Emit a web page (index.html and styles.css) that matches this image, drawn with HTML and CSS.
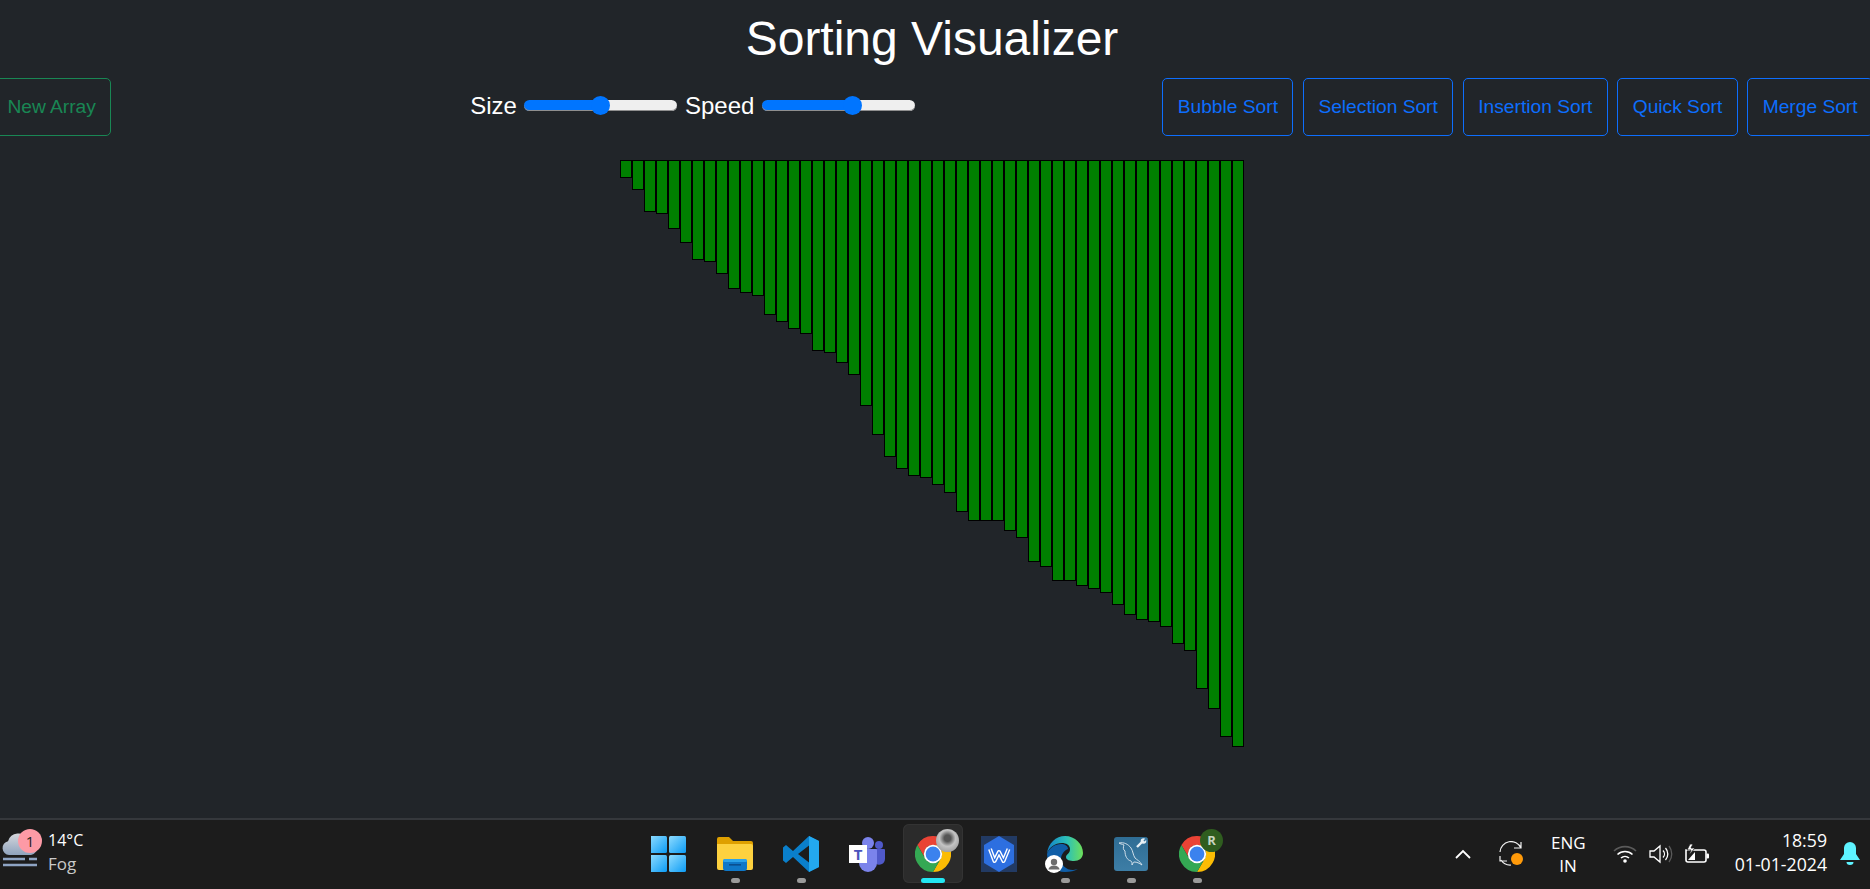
FILE: index.html
```html
<!DOCTYPE html>
<html lang="en">
<head>
  <meta charset="UTF-8" />
  <title>Sorting Visualizer</title>
  <link rel="stylesheet" href="styles.css">
</head>
<body>

<svg class="defs" width="0" height="0" aria-hidden="true">
  <symbol id="chrome" viewBox="0 0 36 36">
    <path d="M2.41 9A18 18 0 0 1 33.59 9H18A9 9 0 0 0 10.2 22.5Z" fill="#ea4335"/>
    <path d="M2.41 9A18 18 0 0 1 33.59 9H18A9 9 0 0 0 10.2 22.5Z" fill="#fbbc04" transform="rotate(120 18 18)"/>
    <path d="M2.41 9A18 18 0 0 1 33.59 9H18A9 9 0 0 0 10.2 22.5Z" fill="#34a853" transform="rotate(240 18 18)"/>
    <circle cx="18" cy="18" r="9.2" fill="#fff"/>
    <circle cx="18" cy="18" r="7.4" fill="#3b82ee"/>
  </symbol>
  <linearGradient id="win-g" x1="0" y1="0" x2="1" y2="1">
    <stop offset="0" stop-color="#8fdcff"/>
    <stop offset="1" stop-color="#0b9bf5"/>
  </linearGradient>
  <linearGradient id="edge-g" x1="0" y1="0.5" x2="1" y2="0.5">
    <stop offset="0" stop-color="#1383c9"/>
    <stop offset="0.55" stop-color="#2cc0b8"/>
    <stop offset="1" stop-color="#6ee05a"/>
  </linearGradient>
  <linearGradient id="mysql-g" x1="0" y1="0" x2="0" y2="1">
    <stop offset="0" stop-color="#2f6d94"/>
    <stop offset="1" stop-color="#3d7ea6"/>
  </linearGradient>
  <linearGradient id="cloud-g" x1="0" y1="0" x2="0" y2="1">
    <stop offset="0" stop-color="#d5d7dc"/>
    <stop offset="1" stop-color="#8fa3bd"/>
  </linearGradient>
</svg>

<main class="page">
  <h1 class="title">Sorting Visualizer</h1>

  <div class="toolbar">
    <button class="btn btn-green" type="button">New Array</button>

    <div class="controls">
      <label for="size">Size</label>
      <input class="slider" id="size" type="range" value="50" style="--fill:50%">
      <label class="speed-label" for="speed">Speed</label>
      <input class="slider" id="speed" type="range" value="60" style="--fill:59%">
    </div>

    <div class="algos">
      <button class="btn" type="button">Bubble Sort</button>
      <button class="btn" type="button">Selection Sort</button>
      <button class="btn" type="button">Insertion Sort</button>
      <button class="btn" type="button">Quick Sort</button>
      <button class="btn" type="button">Merge Sort</button>
    </div>
  </div>

  <div class="bars">
    <div class="bar" style="height:18px"></div>
    <div class="bar" style="height:30px"></div>
    <div class="bar" style="height:52px"></div>
    <div class="bar" style="height:54px"></div>
    <div class="bar" style="height:69px"></div>
    <div class="bar" style="height:83px"></div>
    <div class="bar" style="height:100px"></div>
    <div class="bar" style="height:102px"></div>
    <div class="bar" style="height:114px"></div>
    <div class="bar" style="height:129px"></div>
    <div class="bar" style="height:133px"></div>
    <div class="bar" style="height:136px"></div>
    <div class="bar" style="height:155px"></div>
    <div class="bar" style="height:162px"></div>
    <div class="bar" style="height:169px"></div>
    <div class="bar" style="height:174px"></div>
    <div class="bar" style="height:191px"></div>
    <div class="bar" style="height:193px"></div>
    <div class="bar" style="height:203px"></div>
    <div class="bar" style="height:215px"></div>
    <div class="bar" style="height:246px"></div>
    <div class="bar" style="height:275px"></div>
    <div class="bar" style="height:297px"></div>
    <div class="bar" style="height:309px"></div>
    <div class="bar" style="height:316px"></div>
    <div class="bar" style="height:318px"></div>
    <div class="bar" style="height:325px"></div>
    <div class="bar" style="height:333px"></div>
    <div class="bar" style="height:352px"></div>
    <div class="bar" style="height:361px"></div>
    <div class="bar" style="height:361px"></div>
    <div class="bar" style="height:361px"></div>
    <div class="bar" style="height:371px"></div>
    <div class="bar" style="height:378px"></div>
    <div class="bar" style="height:402px"></div>
    <div class="bar" style="height:407px"></div>
    <div class="bar" style="height:421px"></div>
    <div class="bar" style="height:421px"></div>
    <div class="bar" style="height:426px"></div>
    <div class="bar" style="height:429px"></div>
    <div class="bar" style="height:433px"></div>
    <div class="bar" style="height:445px"></div>
    <div class="bar" style="height:455px"></div>
    <div class="bar" style="height:460px"></div>
    <div class="bar" style="height:462px"></div>
    <div class="bar" style="height:467px"></div>
    <div class="bar" style="height:484px"></div>
    <div class="bar" style="height:491px"></div>
    <div class="bar" style="height:529px"></div>
    <div class="bar" style="height:549px"></div>
    <div class="bar" style="height:577px"></div>
    <div class="bar" style="height:587px"></div>
  </div>
</main>

<footer class="taskbar">
  <div class="weather">
    <div class="weather-icon">
      <svg width="38" height="38" viewBox="0 0 38 38">
        <path d="M8 24a7 7 0 0 1-1-13.8A11 11 0 0 1 27 8a8 8 0 0 1 3 16Z" fill="url(#cloud-g)"/>
        <path d="M2 28h22M28 28h8M2 34h34" stroke="#8ea4c4" stroke-width="2.6" fill="none"/>
      </svg>
      <span class="weather-badge">1</span>
    </div>
    <div class="weather-text">
      <span class="temp">14°C</span>
      <span class="cond">Fog</span>
    </div>
  </div>

  <div class="apps">
    <div class="app">
      <svg class="icon" width="36" height="36" viewBox="1 0 36 36">
        <rect x="0" y="0" width="17" height="17" rx="1.5" fill="url(#win-g)"/>
        <rect x="19" y="0" width="17" height="17" rx="1.5" fill="url(#win-g)"/>
        <rect x="0" y="19" width="17" height="17" rx="1.5" fill="url(#win-g)"/>
        <rect x="19" y="19" width="17" height="17" rx="1.5" fill="url(#win-g)"/>
      </svg>
    </div>
    <div class="app">
      <svg class="icon" width="36" height="36" viewBox="0 0 36 36">
        <path d="M0 3a2 2 0 0 1 2-2h10l4 4h18a2 2 0 0 1 2 2v4H0Z" fill="#dfa000"/>
        <path d="M0 8h34a2 2 0 0 1 2 2v22a2 2 0 0 1-2 2H2a2 2 0 0 1-2-2Z" fill="#fdd13f"/>
        <rect x="6" y="23" width="24" height="12" rx="3" fill="#0f78c8"/>
        <rect x="6" y="23" width="24" height="3" rx="1.5" fill="#2ba3ea"/>
        <rect x="12" y="28" width="12" height="1.6" fill="#0a4f8f"/>
      </svg>
      <span class="dot"></span>
    </div>
    <div class="app">
      <svg class="icon" width="36" height="36" viewBox="0 0 36 36">
        <path d="M26 0 36 5v26l-10 5L10 21 3 27 0 24.500V11.500L3 9l7 6Z" fill="#0a7fcb"/>
        <path d="M26 0 36 5v26l-10 5Z" fill="#23a8ef"/>
        <path d="M26 9.500 15 18l11 8.500Z" fill="#1c1c1c"/>
      </svg>
      <span class="dot"></span>
    </div>
    <div class="app">
      <svg class="icon" width="36" height="36" viewBox="0 0 36 36">
        <circle cx="19" cy="7" r="6" fill="#7b83eb"/>
        <circle cx="30" cy="9" r="4" fill="#5059c9"/>
        <path d="M24 13h11a1 1 0 0 1 1 1v9a6 6 0 0 1-9 5Z" fill="#5059c9"/>
        <path d="M10 13h17a1 1 0 0 1 1 1v13a9 9 0 0 1-18 0Z" fill="#7b83eb"/>
      </svg>
      <span class="teams-t">T</span>
      <span class="dot dot-none"></span>
    </div>
    <div class="app app-active">
      <svg class="icon" width="36" height="36"><use href="#chrome"/></svg>
      <span class="avatar avatar-photo"></span>
      <span class="dot dot-active"></span>
    </div>
    <div class="app">
      <svg class="icon" width="36" height="36" viewBox="0 0 36 36">
        <rect width="36" height="36" fill="#223a63"/>
        <path d="M18 0 33 9v18L18 36 3 27V9Z" fill="#2d6fe0"/>
        <path d="M9 13 13.500 25 18 16l4.500 9L27.500 13" fill="none" stroke="#fff" stroke-width="4" stroke-linejoin="round"/>
        <path d="M9 13 13.500 25 18 16l4.500 9L27.500 13" fill="none" stroke="#2d6fe0" stroke-width="1.200" stroke-linejoin="round"/>
      </svg>
    </div>
    <div class="app">
      <svg class="icon" width="36" height="36" viewBox="0 0 36 36">
        <path d="M0 18C1 7 9 0 18 0c10 0 18 8 18 17 0 5-4 8-9 8-4 0-8-1-8-4 0-3 4-3 4-8 0-4-4-6-8-6C8 7 2 11 0 18Z" fill="url(#edge-g)"/>
        <path d="M0 18c2-6 8-10 14-10 4 0 7 2 7 5-3 1-7 5-7 10 0 6 5 11 12 11 2 0 4-1 5-1-3 2-8 3-13 3C8 36 0 28 0 18Z" fill="#0f5ea8"/>
      </svg>
      <span class="user-badge">
        <svg width="18" height="18" viewBox="0 0 18 18">
          <circle cx="9" cy="7" r="3.200" fill="#6d6d6d"/>
          <path d="M3.500 14.500a5.500 4 0 0 1 11 0Z" fill="#6d6d6d"/>
        </svg>
      </span>
      <span class="dot"></span>
    </div>
    <div class="app">
      <svg class="icon" width="36" height="36" viewBox="0 0 36 36">
        <rect x="1" y="1" width="34" height="34" rx="3" fill="url(#mysql-g)"/>
        <path d="M6 7c5-1 9 1 12 5 2 3 2 7 4 10 2 2 5 3 7 7-3-2-5-3-8-3-1 0-1 2-2 3 0-2 0-3-1-4-4-1-6-5-6-10-2-1-2-4-1-6C9 8 7 8 6 7Z" fill="none" stroke="#dfe9f0" stroke-width="0.900"/>
        <path d="M24 11l6-6" fill="none" stroke="#e8f0f5" stroke-width="2.400"/>
        <circle cx="30.500" cy="5" r="2.800" fill="#e8f0f5"/>
        <path d="M31 5l3-3" stroke="#3a78a0" stroke-width="1.600"/>
      </svg>
      <span class="dot"></span>
    </div>
    <div class="app">
      <svg class="icon" width="36" height="36"><use href="#chrome"/></svg>
      <span class="avatar avatar-r">R</span>
      <span class="dot"></span>
    </div>
  </div>

  <div class="tray">
    <svg class="chevron" width="16" height="10" viewBox="0 0 16 10">
      <path d="M1 9l7-7 7 7" fill="none" stroke="#fff" stroke-width="1.800"/>
    </svg>
    <svg class="sync" width="24" height="26" viewBox="0 0 24 26">
      <path d="M1 11A11 11 0 0 1 22 7M22 1V7H15" fill="none" stroke="#f2f2f2" stroke-width="1.200"/>
      <path d="M2 19A11 11 0 0 0 12 24M1 15V20H8" fill="none" stroke="#f2f2f2" stroke-width="1.200"/>
      <circle cx="18" cy="18" r="6" fill="#ff9a0a"/>
    </svg>
    <div class="lang">ENG<br>IN</div>
    <svg class="tray-icon" width="24" height="20" viewBox="0 0 24 20">
      <path d="M1 7a16 16 0 0 1 22 0" fill="none" stroke="#5a5a5a" stroke-width="1.600"/>
      <path d="M4.500 10.500a11 11 0 0 1 15 0M8 14a6 6 0 0 1 8 0" fill="none" stroke="#fff" stroke-width="1.600"/>
      <circle cx="12" cy="17" r="1.800" fill="#fff"/>
    </svg>
    <svg class="tray-icon" width="24" height="20" viewBox="0 0 24 20">
      <path d="M1 7h4l6-5v16l-6-5H1Z" fill="none" stroke="#fff" stroke-width="1.300"/>
      <path d="M14 6.500a5 5 0 0 1 0 7M16.500 4a9 9 0 0 1 0 12" fill="none" stroke="#fff" stroke-width="1.300"/>
      <path d="M20 2a13 13 0 0 1 0 16" fill="none" stroke="#5a5a5a" stroke-width="1.300"/>
    </svg>
    <svg class="tray-icon" width="24" height="20" viewBox="0 0 24 20">
      <path d="M1 6h18a2 2 0 0 1 2 2v8a2 2 0 0 1-2 2H3a2 2 0 0 1-2-2Z" fill="none" stroke="#fff" stroke-width="1.600"/>
      <rect x="21.500" y="9.500" width="2.500" height="5" rx="1" fill="#fff"/>
      <path d="M3 16l7-8v8Z" fill="#fff"/>
      <path d="M5 0 2 6h4l-2 5 6-7H6l2-4Z" fill="#fff" stroke="#1c1c1c" stroke-width="0.800"/>
    </svg>
    <div class="clock">18:59<br>01-01-2024</div>
    <svg class="bell" width="20" height="24" viewBox="0 0 20 24">
      <path d="M10 0a6 6 0 0 1 6 6v6l4 6H0l4-6V6a6 6 0 0 1 6-6Z" fill="#5ef3ff"/>
      <path d="M6.500 20h7a3.500 3 0 0 1-7 0Z" fill="#5ef3ff"/>
    </svg>
  </div>
</footer>

</body>
</html>
```

FILE: styles.css
```css
* {
  box-sizing: border-box;
}
body {
  margin: 0;
  height: 100vh;
  overflow: hidden;
  display: flex;
  flex-direction: column;
  background: #212529;
  color: #fff;
  font-family: "Liberation Sans", Arial, sans-serif;
}
.defs {
  position: absolute;
}
.page {
  flex: 1;
  width: 1864px;
}
.title {
  margin: 10px 0 0;
  font-size: 48px;
  font-weight: 400;
  line-height: 1.2;
  text-align: center;
}
.toolbar {
  display: flex;
  align-items: center;
  margin: 10px -9px 0 -8px;
}
.controls {
  display: flex;
  align-items: center;
  margin-left: 359px;
  padding-bottom: 2px;
  font-size: 24px;
  line-height: 28px;
}
.controls label {
  margin-right: 7px;
}
.controls .speed-label {
  margin: 0 8px;
}
.slider {
  -webkit-appearance: none;
  appearance: none;
  width: 153px;
  height: 19px;
  margin: 0;
  background: transparent;
}
.slider::-webkit-slider-runnable-track {
  height: 11px;
  border-radius: 6px;
  background: linear-gradient(to right, #0075ff var(--fill), #efefef var(--fill));
  box-shadow: inset 0 -1px 0 #8f8f8f;
}
.slider::-webkit-slider-thumb {
  -webkit-appearance: none;
  width: 19px;
  height: 19px;
  margin-top: -4px;
  border-radius: 50%;
  background: #0075ff;
}
.algos {
  display: flex;
  gap: 9.6px;
  margin-left: auto;
}
.btn {
  height: 58px;
  padding: 0 14.4px;
  border: 1px solid #0d6efd;
  border-radius: 5px;
  background: transparent;
  color: #0d6efd;
  font-family: inherit;
  font-size: 19.2px;
  white-space: nowrap;
}
.btn-green {
  border-color: #198754;
  color: #198754;
}
.bars {
  display: flex;
  justify-content: center;
  align-items: flex-start;
  margin-top: 24px;
}
.bar {
  width: 12px;
  border: 1px solid #000;
  background: #008000;
}

/* windows taskbar */
.taskbar {
  display: flex;
  height: 71px;
  padding-top: 4px;
  border-top: 2px solid #35383c;
  background: #1c1c1c;
  font-family: "Open Sans", "Noto Sans", sans-serif;
}
.weather {
  display: flex;
  width: 639px;
  padding-left: 1px;
}
.weather-icon {
  position: relative;
  width: 38px;
  margin-top: 7px;
}
.weather-badge {
  position: absolute;
  top: -2px;
  left: 17px;
  width: 24px;
  height: 24px;
  border-radius: 50%;
  background: #fd9aa6;
  color: #1c1c1c;
  font-size: 15px;
  line-height: 24px;
  text-align: center;
}
.weather-text {
  display: flex;
  flex-direction: column;
  margin: 5px 0 0 9px;
  font-size: 16px;
  line-height: 23px;
}
.temp {
  color: #fff;
}
.cond {
  color: #c9c9c9;
  font-size: 17px;
}
.apps {
  display: flex;
  gap: 6px;
}
.app {
  position: relative;
  display: flex;
  flex-direction: column;
  align-items: center;
  width: 60px;
  height: 59px;
  padding-top: 12px;
  border-radius: 6px;
}
.app-active {
  background: #2b2b2b;
  box-shadow: inset 0 0 0 1px #333;
}
.icon {
  flex: none;
}
.dot {
  width: 9px;
  height: 5px;
  margin-top: 6px;
  border-radius: 3px;
  background: #9a9a9a;
}
.dot-none {
  visibility: hidden;
}
.dot-active {
  width: 24px;
  background: #22e6f2;
}
.teams-t {
  position: absolute;
  top: 21px;
  left: 12px;
  width: 18px;
  height: 18px;
  background: #fff;
  color: #4b53bc;
  font-size: 15px;
  font-weight: 700;
  line-height: 18px;
  text-align: center;
}
.avatar {
  position: absolute;
  top: 5px;
  left: 33px;
  width: 23px;
  height: 23px;
  border-radius: 50%;
}
.avatar-photo {
  background: radial-gradient(circle at 50% 40%, #555 18%, #c4c4c4 45%, #8a8a8a 100%);
}
.avatar-r {
  background: #2f5d1f;
  color: #c9d6c0;
  font-size: 13px;
  font-weight: 700;
  line-height: 23px;
  text-align: center;
}
.user-badge {
  position: absolute;
  top: 31px;
  left: 10px;
  width: 18px;
  height: 18px;
  border-radius: 50%;
  background: #fff;
}
.tray {
  display: flex;
  align-items: center;
  margin-left: auto;
  padding: 0 10px 6px 0;
  color: #fff;
}
.chevron {
  margin-right: 28px;
}
.sync {
  margin-right: 28px;
}
.lang {
  width: 34px;
  margin-right: 28px;
  font-size: 17px;
  line-height: 23px;
  text-align: center;
}
.tray-icon {
  margin-right: 12px;
}
.clock {
  width: 93px;
  margin: 0 0 3px 13px;
  font-size: 17.7px;
  line-height: 24px;
  text-align: right;
  white-space: nowrap;
}
.bell {
  margin-left: 13px;
}
```
